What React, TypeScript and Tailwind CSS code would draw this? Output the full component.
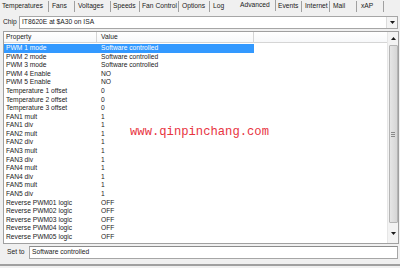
const tabs = [
  { label: "Temperatures", cls: "w-[49px] pl-[2px] border-r" },
  { label: "Fans", cls: "w-[26px] pl-[3px] border-r" },
  { label: "Voltages", cls: "w-[36px] pl-[3px] border-r" },
  { label: "Speeds", cls: "w-[29px] pl-[2px] border-r" },
  { label: "Fan Control", cls: "w-[39px] pl-[2px] border-r" },
  { label: "Options", cls: "w-[31px] pl-[3px] border-r" },
  { label: "Log", cls: "w-[22px] pl-[3px]" },
  { label: "Advanced", cls: "w-[44px] pl-[8px] border-r -mt-[1px]" },
  { label: "Events", cls: "w-[26px] pl-[2px] border-r" },
  { label: "Internet", cls: "w-[28px] pl-[3px] border-r" },
  { label: "Mail", cls: "w-[27px] pl-[3px] border-r" },
  { label: "xAP", cls: "w-[27px] pl-[4px] border-r" },
];

const rows: [string, string][] = [
  ["PWM 1 mode", "Software controlled"],
  ["PWM 2 mode", "Software controlled"],
  ["PWM 3 mode", "Software controlled"],
  ["PWM 4 Enable", "NO"],
  ["PWM 5 Enable", "NO"],
  ["Temperature 1 offset", "0"],
  ["Temperature 2 offset", "0"],
  ["Temperature 3 offset", "0"],
  ["FAN1 mult", "1"],
  ["FAN1 div", "1"],
  ["FAN2 mult", "1"],
  ["FAN2 div", "1"],
  ["FAN3 mult", "1"],
  ["FAN3 div", "1"],
  ["FAN4 mult", "1"],
  ["FAN4 div", "1"],
  ["FAN5 mult", "1"],
  ["FAN5 div", "1"],
  ["Reverse PWM01 logic", "OFF"],
  ["Reverse PWM02 logic", "OFF"],
  ["Reverse PWM03 logic", "OFF"],
  ["Reverse PWM04 logic", "OFF"],
  ["Reverse PWM05 logic", "OFF"],
];

const Arrow = ({ up = false }: { up?: boolean }) => (
  <svg width="5" height="3" viewBox="0 0 5 3" aria-hidden="true">
    <path d={up ? "M0 3 L2.5 0 L5 3 Z" : "M0 0 L5 0 L2.5 3 Z"} fill="#1a1a1a" />
  </svg>
);

export default function App() {
  return (
    <div className="relative w-[400px] h-[268px] overflow-hidden bg-[#f0f0f0] text-[6.7px] text-[#222] font-['Liberation_Sans',Arial,sans-serif]">
      {/* tab strip */}
      <div className="flex h-[14px] pt-[1px]">
        {tabs.map((t) => (
          <div
            key={t.label}
            className={`${t.cls} h-[11px] flex items-center border-[#a0a0a0] leading-none whitespace-nowrap`}
          >
            {t.label}
          </div>
        ))}
      </div>

      {/* chip selector */}
      <div className="flex items-center h-[17px] pl-[3px] pr-[2px]">
        <span className="w-[16px]">Chip</span>
        <div className="flex-1 h-[13px] flex items-center bg-white border border-[#a6a6a6] pl-[2px]">
          <span className="flex-1">IT8620E at $A30 on ISA</span>
          <div className="w-[11px] h-full flex items-center justify-center bg-[#f4f4f4] border-l border-[#dcdcdc]">
            <Arrow />
          </div>
        </div>
      </div>

      {/* property list */}
      <div className="flex h-[213px] ml-[3px] mr-[1px] bg-white border border-[#a0a0a0]">
        <div className="flex-1 flex flex-col">
          <div className="flex h-[11px] border-b border-[#d5d5d5] bg-gradient-to-b from-white to-[#f7f8fa]">
            <div className="w-[93px] pl-[2px] flex items-center border-r border-[#d5d5d5]">Property</div>
            <div className="w-[157px] pl-[4px] flex items-center border-r border-[#d5d5d5]">Value</div>
            <div className="flex-1" />
          </div>
          <div className="pt-[1px]">
            {rows.map(([p, v], i) => (
              <div key={p} className="flex h-[8.6px] items-center leading-none">
                <div className={`flex w-[250px] h-full items-center ${i === 0 ? "bg-[#3399ff] text-white" : ""}`}>
                  <span className="w-[93px] pl-[2px] whitespace-nowrap">{p}</span>
                  <span className="pl-[4px] whitespace-nowrap">{v}</span>
                </div>
              </div>
            ))}
          </div>
        </div>

        {/* vertical scrollbar */}
        <div className="w-[11px] flex flex-col items-center bg-[#f3f3f3] border-l border-[#e6e6e6]">
          <div className="h-[13px] flex items-center justify-center">
            <Arrow up />
          </div>
          <div className="w-[9px] h-[178px] flex items-center justify-center rounded-[1px] border border-[#b5b5b5] bg-gradient-to-r from-[#e6e6e6] to-[#d6d6d6]">
            <div className="flex flex-col gap-[1px]">
              <div className="w-[4px] h-[1px] bg-[#8a8a8a]" />
              <div className="w-[4px] h-[1px] bg-[#8a8a8a]" />
              <div className="w-[4px] h-[1px] bg-[#8a8a8a]" />
            </div>
          </div>
          <div className="flex-1 flex items-center justify-center">
            <Arrow />
          </div>
        </div>
      </div>

      {/* set value */}
      <div className="flex items-center h-[16px] pl-[7px] pr-[2px]">
        <span className="w-[22px]">Set to</span>
        <div className="flex-1 h-[13px] flex items-center bg-white border border-[#a6a6a6] border-t-[#8c8c8c] pl-[2px]">
          Software controlled
        </div>
      </div>
      <div className="absolute left-0 right-0 bottom-[2px] h-[2px] bg-[#a0a0a0]" />

      {/* watermark */}
      <div className="absolute left-[130px] top-[126px] text-[12.2px] leading-none text-[#e8343f] font-['Liberation_Mono',monospace]">
        www.qinpinchang.com
      </div>
    </div>
  );
}
